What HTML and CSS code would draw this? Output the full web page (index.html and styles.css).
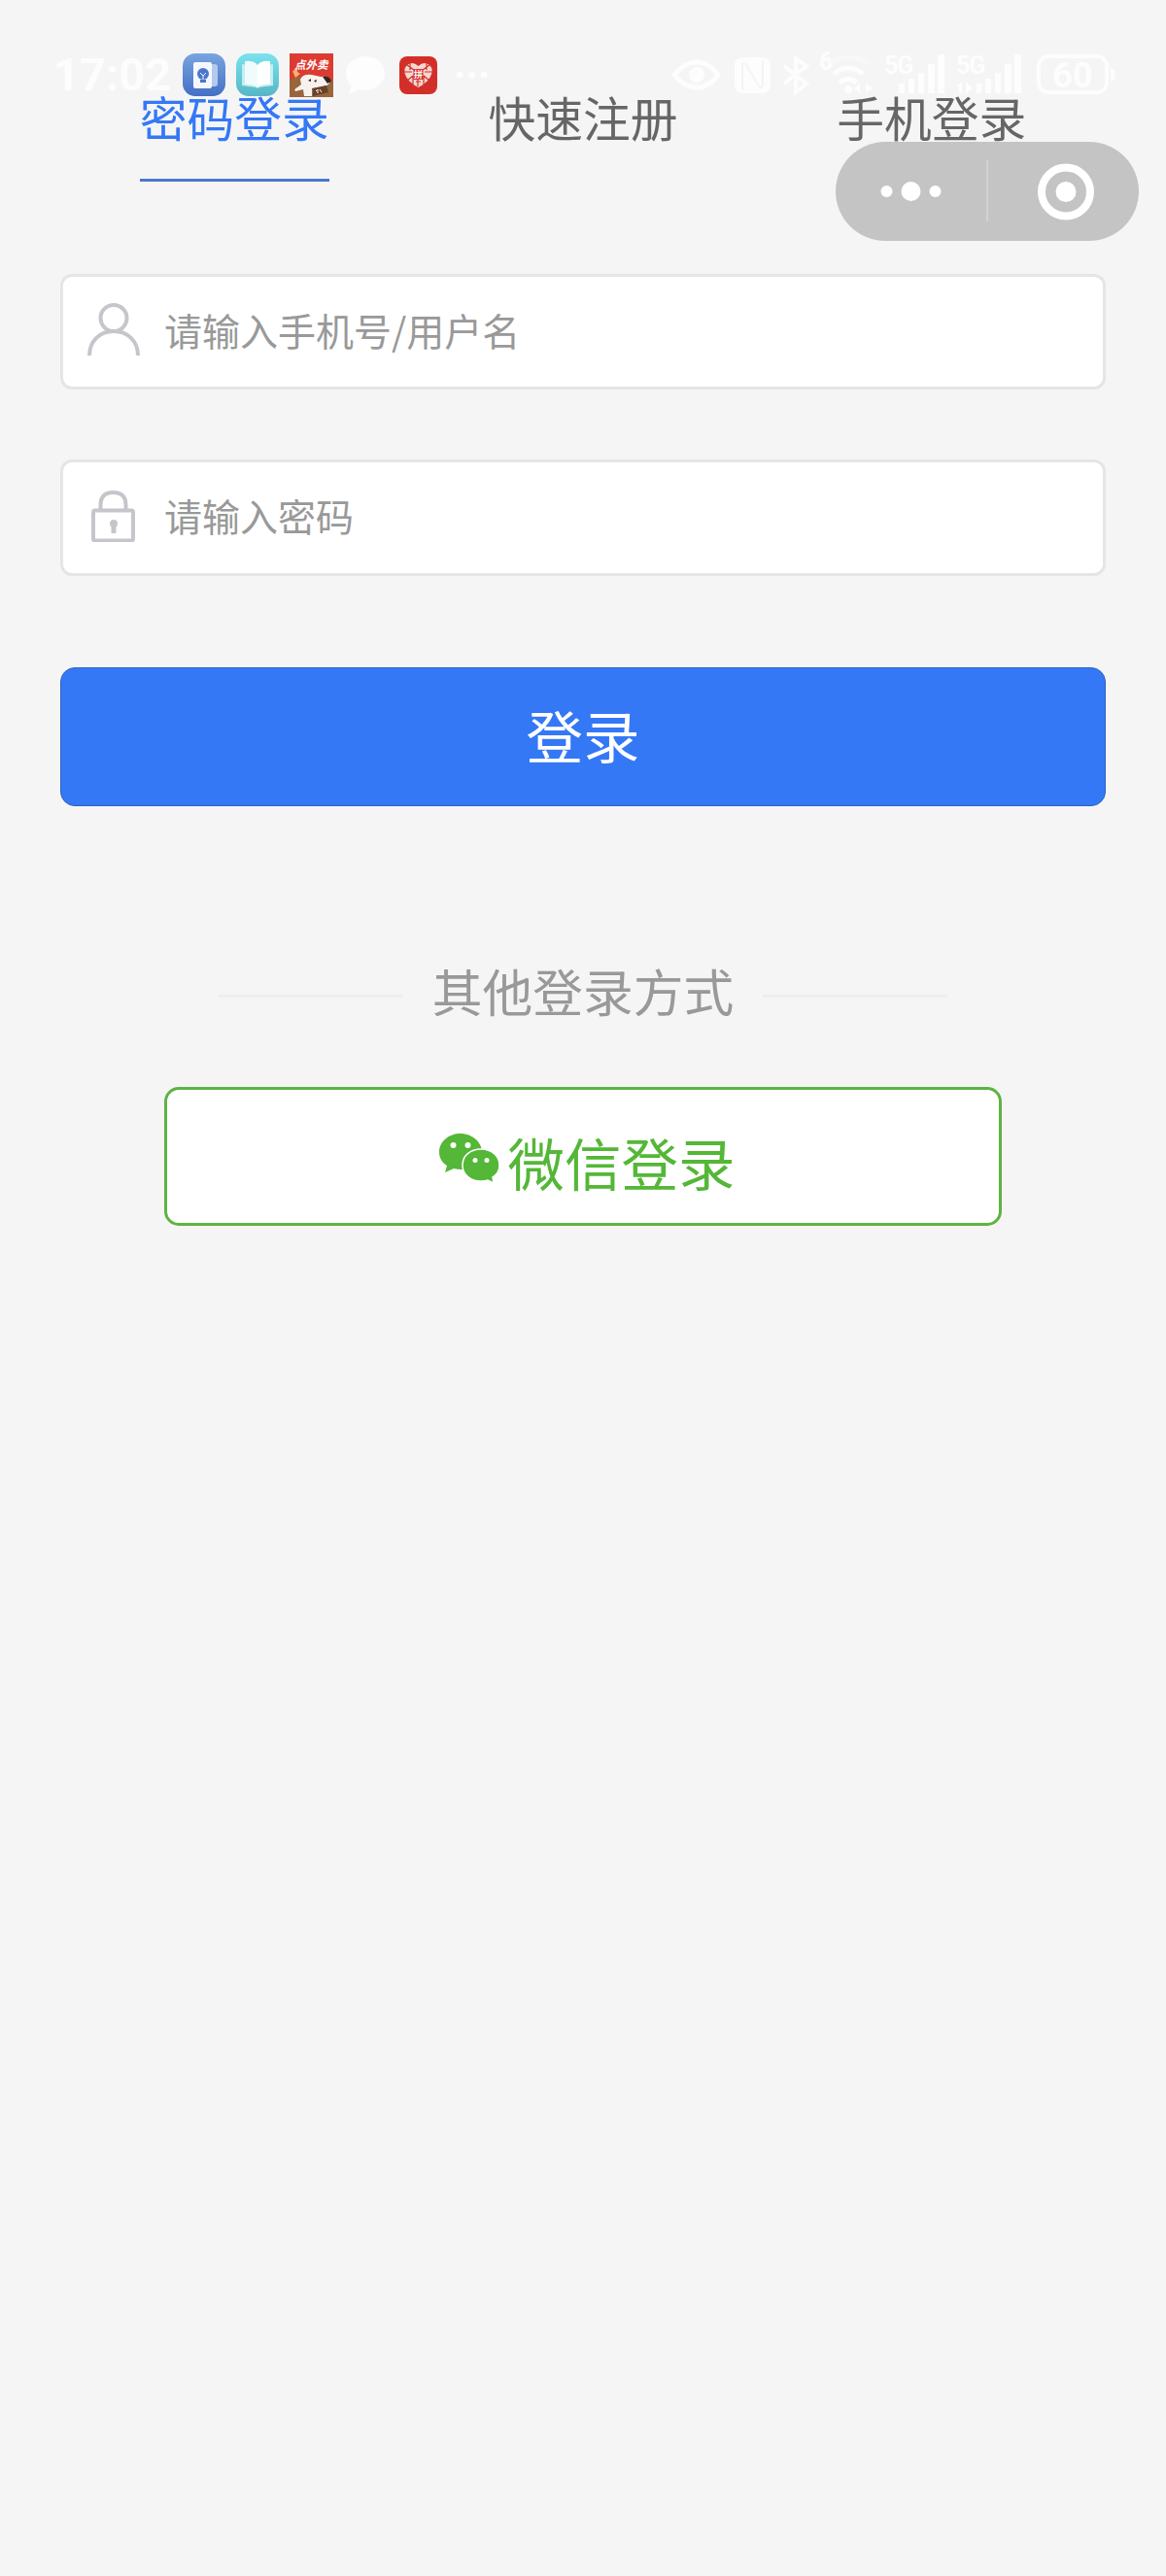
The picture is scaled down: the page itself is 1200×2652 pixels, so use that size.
FILE: index.html
```html
<!DOCTYPE html>
<html lang="zh-CN">
<head>
    <meta charset="UTF-8">
    <title>登录</title>
    <link rel="stylesheet" href="styles.css">
</head>
<body>
    <div class="status-bar">
        <span class="time">17:02</span>
        <svg class="status-left" width="320" height="70" viewBox="185 42 320 70">
            <defs>
                <linearGradient id="blue" x1="0" y1="0" x2="0" y2="1"><stop offset="0" stop-color="#78a5df"/><stop offset="1" stop-color="#446fc6"/></linearGradient>
                <linearGradient id="cyan" x1="0" y1="0" x2="0" y2="1"><stop offset="0" stop-color="#79e3ee"/><stop offset="1" stop-color="#57b6c6"/></linearGradient>
            </defs>
            <!-- заметки -->
            <rect x="188" y="55" width="44" height="44" rx="13" fill="url(#blue)"/>
            <rect x="203" y="66" width="21" height="23" rx="3" fill="#b4c9ec"/>
            <rect x="199" y="64" width="19" height="27" rx="2" fill="#f4f8fd"/>
            <circle cx="209" cy="76" r="6" fill="#4a77cb"/>
            <path d="M206 82h6v3h-6z" fill="#4a77cb"/>
            <path d="M206 75l3 3 3-3M209 78v4" stroke="#f4f8fd" fill="none"/>
            <!-- книга -->
            <rect x="243" y="55" width="44" height="44" rx="13" fill="url(#cyan)"/>
            <path d="M249 66l16 2v22l-16-2zM281 66l-16 2v22l16-2z" fill="#c3eef2"/>
            <path d="M252 63q9-1 13 4v24q-4-5-13-4z" fill="#f1fbfc"/>
            <path d="M278 63q-9-1-13 4v24q4-5 13-4z" fill="#fff"/>
            <!-- доставка -->
            <rect x="298" y="55" width="45" height="45" fill="#dc3b31"/>
            <path d="M298 82l8-3 37 5v16h-45z" fill="#99653b"/>
            <path d="M301 73l5-2v3l3 2-5 4z" fill="#f4b06d"/>
            <path d="M309 82q2-6 12-5l9 2q7-1 9 3 2 4-3 6l-13 3q-2 3-2 8h-8l-1-7-8 2q-2-2 2-4l4-3z" fill="#f7f2ed"/>
            <path d="M332 79q8-1 9 5l-4 2zM317 83l3-2v3zM323 83l3-1-1 3z" fill="#302722"/>
            <path d="M321 91l15-3 2 7-16 4z" fill="#67422a"/>
            <path d="M325 94l2-2v4m2-4l2 3" stroke="#f7f2ed" fill="none"/>
            <text class="ad-text" x="303" y="71" fill="#fff">点外卖</text>
            <path class="ghost" d="M376 58c-11 0-20 7-20 17 0 6 3 11 6 13l-3 9 11-5q3 1 6 1c11 0 20-8 20-18s-9-17-20-17z"/>
            <!-- сердце -->
            <rect x="411" y="58" width="39" height="39" rx="8" fill="#d32f29"/>
            <path d="M430.500 68q-5-5-10-2-5 3-4 9 2 9 14 15 12-6 14-15 1-6-4-9-5-3-10 2z" fill="#f5d6d0"/>
            <path d="M416 74h8m-5-7l7 5m-4-8v8m-3 11l6-5v9m20-13h-8m5-7l-7 5m4-8v8m3 11l-6-5v9m-8-3h5m-3-3v8" stroke="#d32f29" stroke-width="1.200" fill="none"/>
            <path d="M425.500 71h10v11h-10z" fill="#d32f29"/>
            <text class="pin-text" x="426" y="80" fill="#fff">拼</text>
            <circle class="ghost" cx="473" cy="77" r="3.500"/><circle class="ghost" cx="485.500" cy="77" r="3.500"/><circle class="ghost" cx="498" cy="77" r="3.500"/>
        </svg>
        <svg class="status-right" width="470" height="70" viewBox="685 42 470 70">
            <path class="ghost-line" stroke-width="5" d="M694 77q10-13 23-13t22 13q-9 13-22 13t-23-13z"/>
            <circle class="ghost" cx="717" cy="77" r="8"/>
            <rect class="ghost" x="756" y="59" width="37" height="37" rx="8"/>
            <path d="M764 93V66q3-2 5 2l12 21q3 3 4-1V62" stroke="#f4f4f4" stroke-width="2" fill="none"/>
            <path class="ghost-line" stroke-width="4" d="M807 68l23 18-11 9V60l11 8-23 18"/>
            <text class="tiny" x="843" y="72">6</text>
            <path class="ghost-line" stroke-width="5" d="M858 76q15-12 30 0M864 85q9-7 18 0"/>
            <path class="faint-line" stroke-width="4" d="M855 65q19-12 39 0"/>
            <circle class="ghost" cx="873" cy="92" r="4"/>
            <path class="ghost" d="M879 91l6-6v11zM898 91l-7-6v11z"/>
            <text class="tiny" x="910" y="76">5G</text>
            <path class="ghost" d="M925 86h6v10h-6zM935 81h6v15h-6zM945 75h6v21h-6zM955 66h7v30h-7zM965 56h7v40h-7z"/>
            <text class="tiny" x="984" y="76">5G</text>
            <path class="ghost" d="M984 89l6-5v12h-3v-7zM1001 91l-7-7v12zM1005 86h5v10h-5zM1014 81h6v15h-6zM1024 75h6v21h-6zM1034 66h7v30h-7zM1044 56h7v40h-7z"/>
            <rect class="ghost-line" x="1069" y="58" width="70" height="37" rx="10" stroke-width="4"/>
            <path class="ghost" d="M1143 70q5 1 5 7t-5 7z"/>
            <text class="battery" x="1104" y="90" text-anchor="middle">60</text>
        </svg>
    </div>

    <div class="capsule">
        <svg width="312" height="102" viewBox="0 0 312 102" fill="#fff">
            <circle cx="52.500" cy="51" r="6"/>
            <circle cx="77.500" cy="51" r="10"/>
            <circle cx="102.500" cy="51" r="6"/>
            <path d="M155 19h2v63h-2z" fill="#d3d3d3"/>
            <circle cx="237" cy="51.500" r="25" fill="none" stroke="#fff" stroke-width="8"/>
            <circle cx="237" cy="51.500" r="10.500"/>
        </svg>
    </div>

    <div class="container">
        <ul class="tabs">
            <li class="active"><a>密码登录</a></li>
            <li><a>快速注册</a></li>
            <li><a>手机登录</a></li>
        </ul>

        <div class="field">
            <svg width="54" height="54" viewBox="0 0 54 54" fill="none" stroke="#c5c6cb" stroke-width="4">
                <circle cx="27" cy="15.500" r="13.500"/>
                <path d="M2 54C2 39 13 29 27 29s25 10 25 25"/>
            </svg>
            <input type="text" placeholder="请输入手机号/用户名">
        </div>
        <div class="field field-pass">
            <svg width="54" height="54" viewBox="0 0 54 54" fill="none" stroke="#c5c6cb" stroke-width="4">
                <rect x="6" y="21.500" width="41" height="31" rx="2"/>
                <path d="M13.500 21V16q0-13 13-13t13 13v5"/>
                <circle cx="27" cy="35" r="4" fill="#c5c6cb" stroke="none"/>
                <path d="M27 35v10" stroke-width="5"/>
            </svg>
            <input type="password" placeholder="请输入密码">
        </div>

        <button class="login-btn">登录</button>

        <div class="other"><span>其他登录方式</span></div>

        <button class="wechat-btn">
            <svg width="62" height="51" viewBox="0 0 62 51" fill="#54b737">
                <path d="M22 0C10 0 0 8 0 19c0 6 3 11 8 14l-2 7 9-4q4 1 9 1c12 0 20-8 20-18S34 0 22 0z"/>
                <path d="M43 16c-11 0-19 7-19 16.500S32 49 43 49q4 0 7-1l6 3-1-6c5-3 7-7 7-12.500C62 23 54 16 43 16z" stroke="#fff" stroke-width="1.500"/>
                <g fill="#fff"><circle cx="14.500" cy="12" r="3"/><circle cx="29.500" cy="12" r="3"/><circle cx="37" cy="27.500" r="2.500"/><circle cx="49" cy="27.500" r="2.500"/></g>
            </svg>
            <span>微信登录</span>
        </button>
    </div>
</body>
</html>
```
FILE: styles.css
```css
* {
    box-sizing: border-box;
}
body {
    font-family: "Noto Sans CJK SC", sans-serif;
    background-color: #f5f5f5;
    margin: 0;
    padding: 0;
    min-height: 2652px;
}
.status-bar {
    position: absolute;
    top: 42px;
    left: 55px;
    width: 1100px;
    height: 70px;
    display: flex;
    align-items: center;
}
.time {
    width: 130px;
    font-family: Roboto, sans-serif;
    font-size: 47px;
    font-weight: bold;
    line-height: 50px;
    color: #fdfdfd;
}
.status-right {
    margin-left: auto;
}
.ghost, .tiny, .battery {
    fill: #fdfdfd;
}
.ghost-line {
    fill: none;
    stroke: #fdfdfd;
}
.faint-line {
    fill: none;
    stroke: #f8f8f8;
}
.tiny {
    font: bold 25px Roboto, sans-serif;
    letter-spacing: -1px;
}
.battery {
    font: bold 36px Roboto, sans-serif;
}
.ad-text {
    font-size: 11.5px;
    font-weight: bold;
    font-style: italic;
}
.pin-text {
    font-size: 9px;
    font-weight: bold;
}
.capsule {
    position: absolute;
    top: 146px;
    left: 860px;
    width: 312px;
    height: 102px;
    border-radius: 51px;
    background-color: #c4c4c4;
}
.capsule svg {
    display: block;
}
.container {
    padding: 84px 62px 0;
}
.tabs {
    list-style-type: none;
    display: flex;
    margin: 0 0 95px;
    padding: 0;
}
.tabs li {
    flex: 1;
    text-align: center;
}
.tabs a {
    display: inline-block;
    height: 103px;
    font-size: 48.75px;
    line-height: 71px;
    color: #666;
    border-bottom: 3px solid transparent;
    vertical-align: top;
}
.tabs .active a {
    color: #3478f6;
    border-bottom-color: #4a77cb;
}
.field {
    display: flex;
    align-items: center;
    height: 119px;
    padding: 0 25px;
    background-color: #fff;
    border: 3px solid #e5e5e5;
    border-radius: 12px;
}
.field svg {
    margin-bottom: 5px;
}
.field-pass {
    height: 120px;
    margin-top: 72px;
}
.field input {
    flex: 1;
    height: 100px;
    margin: 0 0 0 25px;
    padding: 0 0 6px;
    border: none;
    outline: none;
    background: none;
    font-family: inherit;
    font-size: 39px;
}
.field input::placeholder {
    color: #999;
}
button {
    display: flex;
    align-items: center;
    justify-content: center;
    height: 143px;
    padding: 0;
    font-family: inherit;
    font-size: 58.5px;
    line-height: 80px;
}
.login-btn {
    width: 100%;
    margin-top: 94px;
    padding-bottom: 6px;
    color: #fff;
    background-color: #3478f6;
    border: 1px solid #2d62c0;
    border-radius: 15px;
}
.other {
    display: flex;
    align-items: center;
    justify-content: center;
    gap: 30px;
    height: 80px;
    margin-top: 152px;
    font-size: 51.75px;
    color: #999;
}
.other span {
    padding-bottom: 6px;
}
.other::before, .other::after {
    content: "";
    width: 190px;
    height: 3px;
    margin-top: 7px;
    background-color: #eee;
}
.wechat-btn {
    width: 862px;
    margin: 57px auto 0;
    color: #54b737;
    background-color: #fff;
    border: 3px solid #5cb443;
    border-radius: 15px;
}
.wechat-btn svg {
    margin: 4px 8px 0 9px;
}
.wechat-btn span {
    padding-top: 11px;
}
```
